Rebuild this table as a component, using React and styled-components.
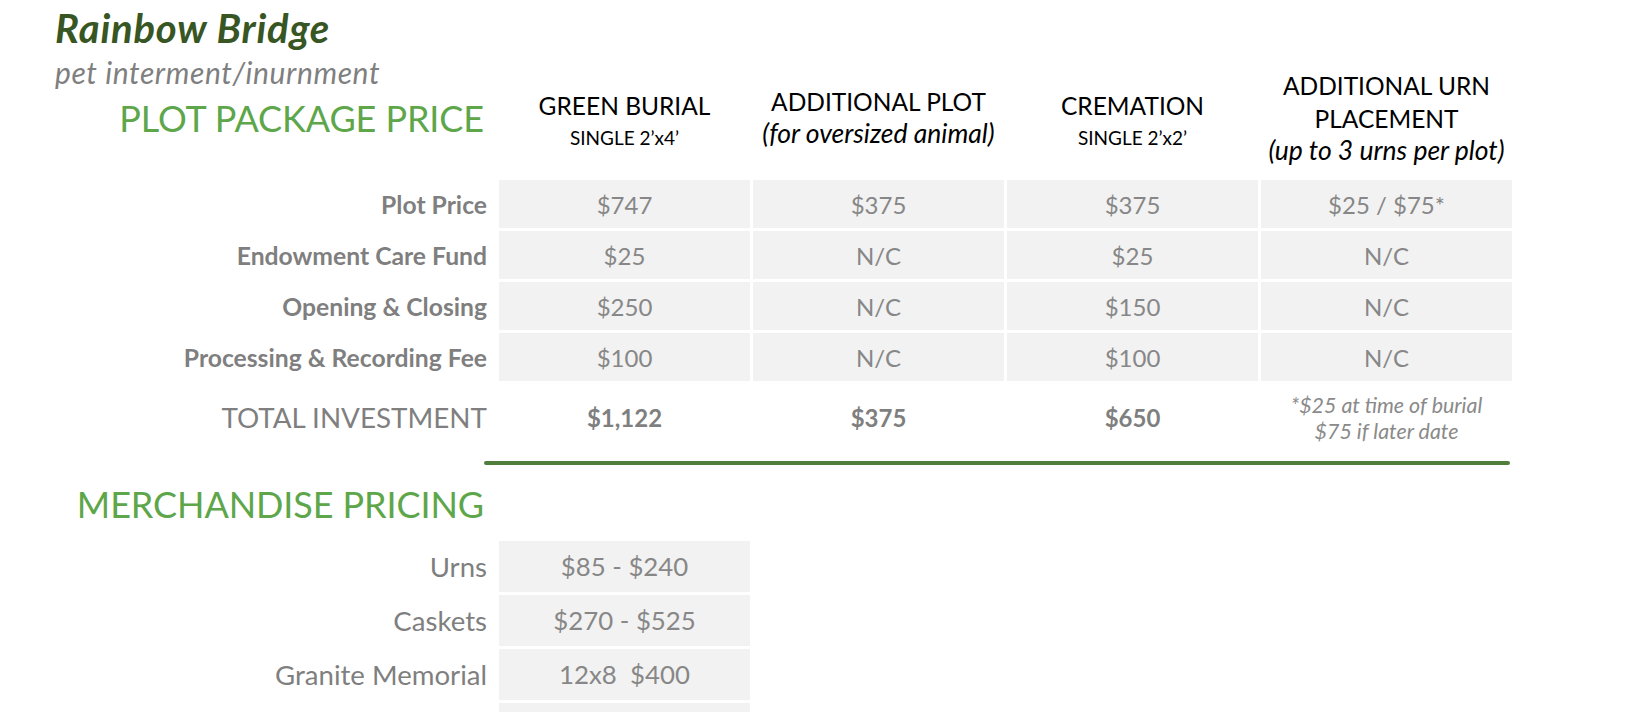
import React from 'react';
import styled, { createGlobalStyle } from 'styled-components';

const GlobalStyle = createGlobalStyle`
  html, body {
    margin: 0;
    padding: 0;
    background: #ffffff;
  }
  body {
    font-family: Lato, 'Open Sans', 'Liberation Sans', sans-serif;
    color: #7f7f7f;
    overflow: hidden;
  }
`;

const Page = styled.div`
  width: 1630px;
  height: 712px;
  overflow: hidden;
`;

const PriceGrid = styled.div`
  display: grid;
  grid-template-columns: 496px repeat(4, 251px);
  column-gap: 3px;
  row-gap: 3px;
`;

const HeaderLabel = styled.div`
  display: flex;
  flex-direction: column;
  padding-bottom: 37px;
`;

const Title = styled.h1`
  margin: 0;
  padding: 5.5px 0 0 55px;
  font-size: 40px;
  line-height: 44px;
  font-weight: 700;
  font-style: italic;
  letter-spacing: 0.8px;
  color: #375623;
`;

const Subtitle = styled.div`
  margin-top: 6.5px;
  padding-left: 55px;
  font-size: 30px;
  line-height: 32px;
  font-style: italic;
  letter-spacing: 0.6px;
  color: #7f7f7f;
`;

const SectionHeading = styled.h2`
  box-sizing: border-box;
  width: 496px;
  margin: ${({ $top }) => $top || 0}px 0 0;
  padding-right: 12px;
  text-align: right;
  font-size: 36px;
  line-height: 44px;
  font-weight: 400;
  letter-spacing: -0.1px;
  color: #5ea64a;
  white-space: nowrap;
`;

const ColumnHead = styled.div`
  align-self: end;
  height: 113px;
  display: flex;
  flex-direction: column;
  align-items: center;
  justify-content: center;
  text-align: center;
  color: #000000;
`;

const HeadLine = styled.div`
  font-size: 24.5px;
  line-height: 33px;
  white-space: nowrap;
`;

const HeadSize = styled.div`
  font-size: 19px;
  line-height: 31px;
  white-space: nowrap;
`;

const HeadNote = styled.div`
  font-size: 26.5px;
  line-height: 31px;
  font-style: italic;
  margin-bottom: 7px;
  white-space: nowrap;
`;

const RowLabel = styled.div`
  display: flex;
  align-items: center;
  justify-content: flex-end;
  padding-right: 9px;
  font-size: ${({ $size }) => $size || 24.7}px;
  font-weight: ${({ $bold }) => ($bold ? 700 : 400)};
  color: #7f7f7f;
  white-space: nowrap;
`;

const Cell = styled.div`
  height: ${({ $h }) => $h || 48}px;
  display: flex;
  align-items: center;
  justify-content: center;
  background: #f2f2f2;
  font-size: ${({ $size }) => $size || 24}px;
  color: #878787;
  white-space: pre;
`;

const TotalCell = styled.div`
  height: 67px;
  display: flex;
  align-items: center;
  justify-content: center;
  font-size: 24px;
  font-weight: 700;
  color: #7f7f7f;
`;

const Footnote = styled.div`
  height: 67px;
  display: flex;
  flex-direction: column;
  align-items: center;
  justify-content: center;
  font-size: 21.4px;
  line-height: 26px;
  font-style: italic;
  color: #8a8a8a;
  white-space: nowrap;
`;

const Rule = styled.div`
  grid-column: 2 / -1;
  margin: 7px 2px 0 -15px;
  height: 3.5px;
  border-radius: 2px;
  background: #4f7f3a;
`;

const MerchGrid = styled.div`
  display: grid;
  grid-template-columns: 496px 251px;
  column-gap: 3px;
  row-gap: 3px;
  margin-top: 15px;
`;

const columns = [
  { lines: ['GREEN BURIAL'], size: 'SINGLE 2’x4’' },
  { lines: ['ADDITIONAL PLOT'], note: '(for oversized animal)' },
  { lines: ['CREMATION'], size: 'SINGLE 2’x2’' },
  { lines: ['ADDITIONAL URN', 'PLACEMENT'], note: '(up to 3 urns per plot)' },
];

const rows = [
  { label: 'Plot Price', values: ['$747', '$375', '$375', '$25 / $75*'] },
  { label: 'Endowment Care Fund', values: ['$25', 'N/C', '$25', 'N/C'] },
  { label: 'Opening & Closing', values: ['$250', 'N/C', '$150', 'N/C'] },
  { label: 'Processing & Recording Fee', values: ['$100', 'N/C', '$100', 'N/C'] },
];

const totals = ['$1,122', '$375', '$650'];

const merchandise = [
  { label: 'Urns', value: '$85 - $240' },
  { label: 'Caskets', value: '$270 - $525' },
  { label: 'Granite Memorial', value: '12x8  $400' },
  { label: '', value: '' },
];

const App = () => (
  <Page>
    <GlobalStyle />
    <PriceGrid>
      <HeaderLabel>
        <Title>Rainbow Bridge</Title>
        <Subtitle>pet interment/inurnment</Subtitle>
        <SectionHeading $top={8}>PLOT PACKAGE PRICE</SectionHeading>
      </HeaderLabel>
      {columns.map((col, i) => (
        <ColumnHead key={i}>
          {col.lines.map(line => (
            <HeadLine key={line}>{line}</HeadLine>
          ))}
          {col.size && <HeadSize>{col.size}</HeadSize>}
          {col.note && <HeadNote>{col.note}</HeadNote>}
        </ColumnHead>
      ))}

      {rows.map(row => (
        <React.Fragment key={row.label}>
          <RowLabel $bold>{row.label}</RowLabel>
          {row.values.map((v, i) => (
            <Cell key={i}>{v}</Cell>
          ))}
        </React.Fragment>
      ))}

      <RowLabel $size={27.8}>TOTAL INVESTMENT</RowLabel>
      {totals.map((t, i) => (
        <TotalCell key={i}>{t}</TotalCell>
      ))}
      <Footnote>
        <div>*$25 at time of burial</div>
        <div>$75 if later date</div>
      </Footnote>

      <Rule />
    </PriceGrid>

    <SectionHeading $top={17}>MERCHANDISE PRICING</SectionHeading>
    <MerchGrid>
      {merchandise.map((m, i) => (
        <React.Fragment key={i}>
          <RowLabel $size={27.6}>{m.label}</RowLabel>
          <Cell $h={51} $size={25.8}>{m.value}</Cell>
        </React.Fragment>
      ))}
    </MerchGrid>
  </Page>
);

export default App;
